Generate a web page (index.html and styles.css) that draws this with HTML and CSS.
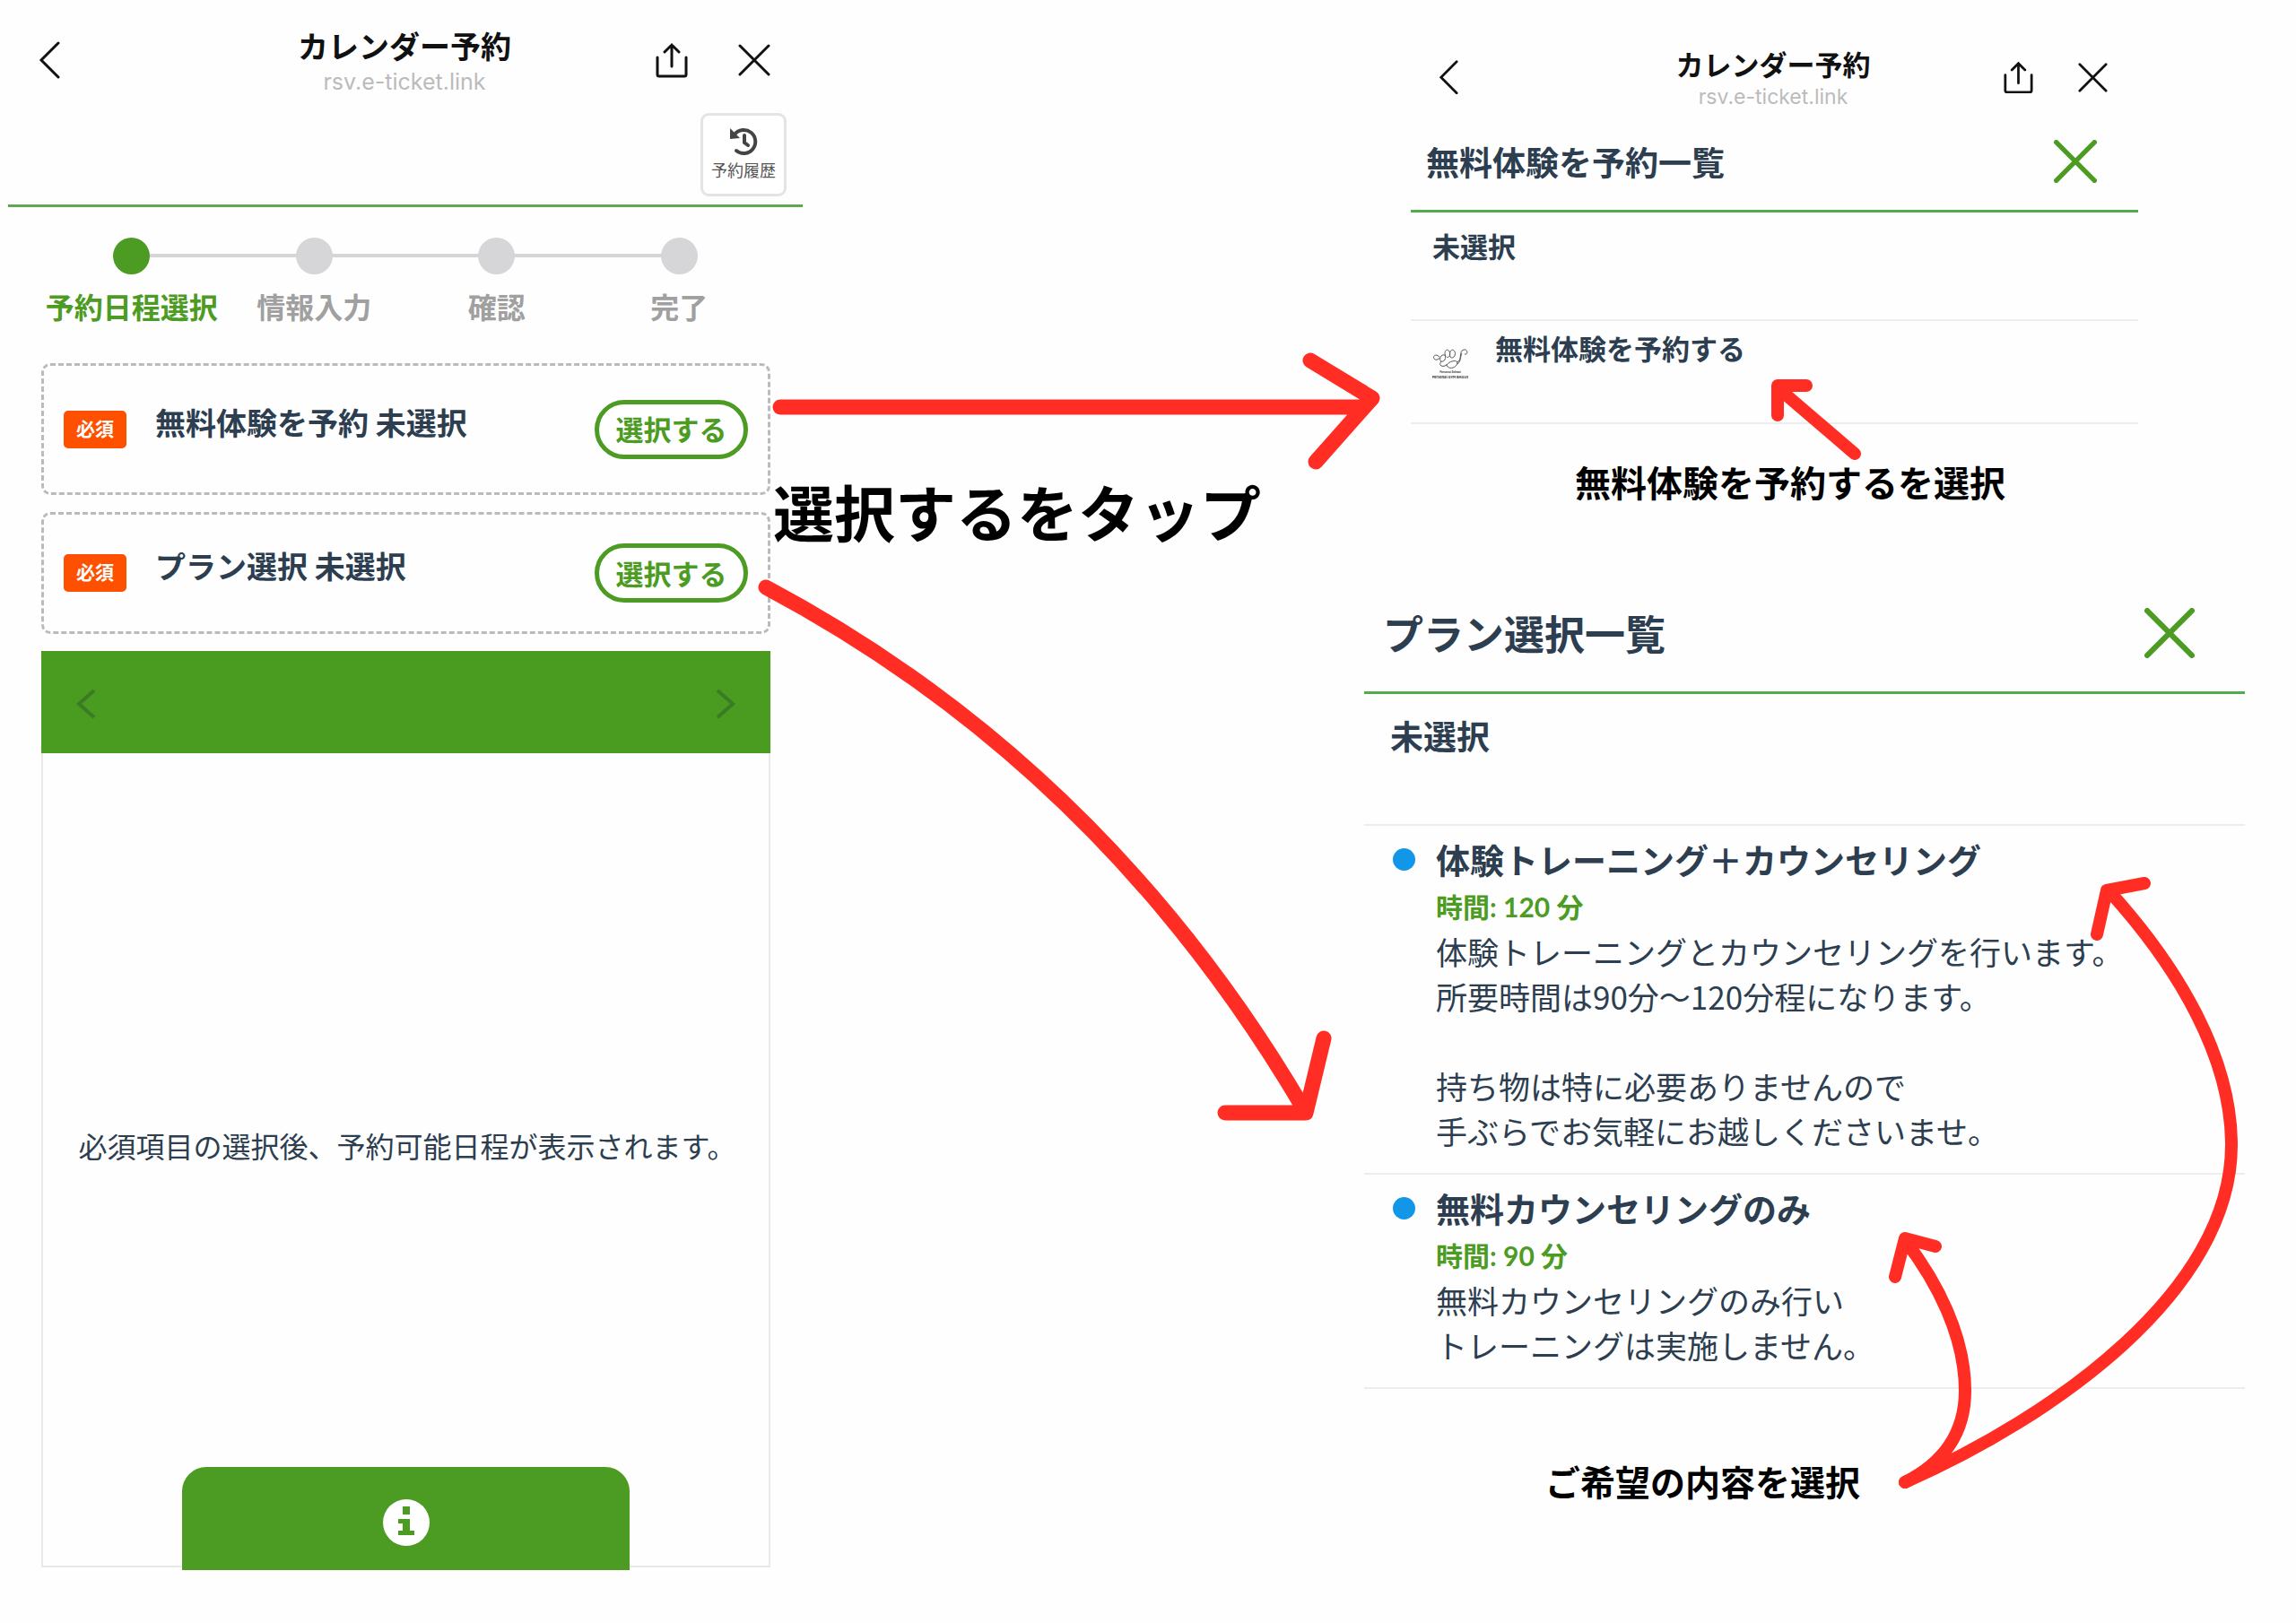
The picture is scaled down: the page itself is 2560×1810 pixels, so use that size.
FILE: index.html
```html
<!DOCTYPE html>
<html lang="ja">

<head>
    <meta charset="UTF-8">
    <meta name="viewport" content="width=device-width, initial-scale=1.0">
    <title>カレンダー予約</title>
    <link rel="stylesheet" href="styles.css">
</head>

<body>
    <main class="board">
        <section class="panel calendar-panel">
            <header class="topbar">
                <button type="button" class="icon-button" aria-label="戻る">
                    <svg class="icon-back" viewBox="0 0 24 42"><path d="M22 2 L3 21 L22 40"/></svg>
                </button>
                <div class="topbar-title">
                    <h1>カレンダー予約</h1>
                    <p>rsv.e-ticket.link</p>
                </div>
                <div class="topbar-actions">
                    <button type="button" class="icon-button" aria-label="共有">
                        <svg class="icon-share" viewBox="0 0 36 40"><path d="M9 16 M2 17 V36 Q2 38 4 38 H32 Q34 38 34 36 V17 M18 27 V3 M10 11 L18 3 L26 11"/></svg>
                    </button>
                    <button type="button" class="icon-button" aria-label="閉じる">
                        <svg class="icon-close" viewBox="0 0 36 36"><path d="M2 2 L34 34 M34 2 L2 34"/></svg>
                    </button>
                </div>
            </header>

            <div class="history-bar">
                <button type="button" class="history-button">
                    <svg class="icon-history" viewBox="0 0 32 32">
                        <path class="line" d="M6 8 A13 13 0 1 1 8 26"/>
                        <path class="line" d="M17 9 V17 L21 20"/>
                        <path class="solid" d="M1 1 L12 12 L1 13 Z"/>
                    </svg>
                    予約履歴
                </button>
            </div>

            <ol class="steps">
                <li class="step active">予約日程選択</li>
                <li class="step">情報入力</li>
                <li class="step">確認</li>
                <li class="step">完了</li>
            </ol>

            <div class="choices">
                <div class="choice choice-tall">
                    <span class="badge">必須</span>
                    <p class="choice-name">無料体験を予約 未選択</p>
                    <button type="button" class="select-button">選択する</button>
                </div>
                <div class="choice">
                    <span class="badge">必須</span>
                    <p class="choice-name">プラン選択 未選択</p>
                    <button type="button" class="select-button">選択する</button>
                </div>

                <div class="calendar">
                    <div class="calendar-header">
                        <button type="button" class="icon-button" aria-label="前へ">
                            <svg class="icon-arrow" viewBox="0 0 24 34"><path d="M21 2 L4 17 L21 32"/></svg>
                        </button>
                        <button type="button" class="icon-button" aria-label="次へ">
                            <svg class="icon-arrow" viewBox="0 0 24 34"><path d="M3 2 L20 17 L3 32"/></svg>
                        </button>
                    </div>
                    <div class="calendar-body">
                        <p>必須項目の選択後、予約可能日程が表示されます。</p>
                        <button type="button" class="info-tab" aria-label="案内">
                            <svg class="icon-info" viewBox="0 0 52 52">
                                <circle cx="26" cy="26" r="26"/>
                                <path d="M22 8 H30 V17 H22 Z M17 22 H30 V35 H35 V40 H17 V35 H22 V27 H17 Z"/>
                            </svg>
                        </button>
                    </div>
                </div>
            </div>
        </section>

        <p class="note note-tap">選択するをタップ</p>

        <div class="lists">
            <section class="panel trial-panel">
                <header class="topbar topbar-small">
                    <button type="button" class="icon-button" aria-label="戻る">
                        <svg class="icon-back" viewBox="0 0 24 42"><path d="M22 2 L3 21 L22 40"/></svg>
                    </button>
                    <div class="topbar-title">
                        <h2>カレンダー予約</h2>
                        <p>rsv.e-ticket.link</p>
                    </div>
                    <div class="topbar-actions">
                        <button type="button" class="icon-button" aria-label="共有">
                            <svg class="icon-share" viewBox="0 0 36 40"><path d="M2 17 V36 Q2 38 4 38 H32 Q34 38 34 36 V17 M18 27 V3 M10 11 L18 3 L26 11"/></svg>
                        </button>
                        <button type="button" class="icon-button" aria-label="閉じる">
                            <svg class="icon-close" viewBox="0 0 36 36"><path d="M2 2 L34 34 M34 2 L2 34"/></svg>
                        </button>
                    </div>
                </header>
                <div class="list-header">
                    <h3>無料体験を予約一覧</h3>
                    <button type="button" class="icon-button green" aria-label="一覧を閉じる">
                        <svg class="icon-close" viewBox="0 0 36 36"><path d="M2 2 L34 34 M34 2 L2 34"/></svg>
                    </button>
                </div>
                <ul class="list">
                    <li class="unselected">未選択</li>
                    <li class="trial-item">
                        <svg class="logo" viewBox="0 0 40 34">
                            <path d="M8 9 C4 5 0 8 2 11 C4 14 8 11 10 8 C13 5 16 8 14 12 C12 16 7 14 9 10 M15 9 C12 2 17 -1 19 3 C21 7 18 11 16 9 M20 9 C18 2 23 -1 25 3 C27 8 22 12 20 9 M10 14 C6 19 12 21 16 18 C20 13 28 12 28 16 C26 23 16 23 16 17 M27 15 C34 14 29 2 35 1 C40 0 40 7 36 6 M28 17 C32 14 31 9 33 5"/>
                            <text class="logo-sub" x="20" y="27">Personal School</text>
                            <text class="logo-name" x="20" y="33">Personal GYM BAGUS</text>
                        </svg>
                        <span>無料体験を予約する</span>
                    </li>
                </ul>
            </section>
            <p class="note note-trial">無料体験を予約するを選択</p>

            <section class="panel plan-panel">
                <div class="list-header">
                    <h3>プラン選択一覧</h3>
                    <button type="button" class="icon-button green" aria-label="一覧を閉じる">
                        <svg class="icon-close" viewBox="0 0 36 36"><path d="M2 2 L34 34 M34 2 L2 34"/></svg>
                    </button>
                </div>
                <ul class="list">
                    <li class="unselected">未選択</li>
                    <li class="plan-item">
                        <h4>体験トレーニング＋カウンセリング</h4>
                        <p class="plan-time">時間: 120 分</p>
                        <p>体験トレーニングとカウンセリングを行います。<br>所要時間は90分〜120分程になります。<br><br>持ち物は特に必要ありませんので<br>手ぶらでお気軽にお越しくださいませ。</p>
                    </li>
                    <li class="plan-item">
                        <h4>無料カウンセリングのみ</h4>
                        <p class="plan-time">時間: 90 分</p>
                        <p>無料カウンセリングのみ行い<br>トレーニングは実施しません。</p>
                    </li>
                </ul>
            </section>
            <p class="note note-plan">ご希望の内容を選択</p>
        </div>

        <!-- hand drawn arrows between the panels -->
        <svg class="arrows" viewBox="0 0 2560 1810" aria-hidden="true">
            <g stroke-width="17">
                <path d="M870 454 H1518 M1461 402 L1530 444 L1467 515"/>
                <path d="M854 655 Q1230 855 1455 1239 M1366 1241 H1456 L1476 1158"/>
            </g>
            <g stroke-width="14">
                <path d="M2068 506 L1984 434 M2014 430 H1982 V463"/>
                <path d="M2124 1653 C2290 1580 2488 1440 2488 1277 C2488 1180 2430 1080 2351 993 M2391 985 L2349 993 L2338 1042"/>
                <path d="M2124 1653 C2170 1630 2191 1595 2191 1551 C2191 1490 2160 1430 2124 1383 M2158 1390 L2124 1381 L2113 1424"/>
            </g>
        </svg>
    </main>
</body>

</html>
```
FILE: styles.css
```css
* {
    box-sizing: border-box;
}

body {
    font-family: 'Noto Sans CJK JP', sans-serif;
    margin: 0;
    color: #2c3e50;
    background-color: #fefefe;
}

h1, h2, h3, h4, p, ul, ol {
    margin: 0;
    padding: 0;
}

ul, ol {
    list-style: none;
}

button {
    font-family: inherit;
    cursor: pointer;
}

svg {
    display: block;
    fill: none;
    stroke: currentColor;
}

/* board: calendar, note, lists */
.board {
    position: relative;
    display: grid;
    grid-template-columns: 886fr 626fr 982fr;
    padding: 0 57px 60px 9px;
}

.arrows {
    position: absolute;
    top: 0;
    left: 0;
    width: 100%;
    color: #ff2d23;
    stroke-linecap: round;
    stroke-linejoin: round;
    pointer-events: none;
}

.note {
    color: #000;
    font-size: 40px;
    font-weight: bold;
    line-height: 60px;
    white-space: nowrap;
}

.note-tap {
    font-size: 68px;
    line-height: 100px;
    margin: 520px 0 0 -33px;
}

.note-trial {
    padding-left: 235px;
    margin-top: 34px;
}

.note-plan {
    padding-left: 202px;
    margin-top: 72px;
    font-size: 39px;
}

/* browser bar */
.topbar {
    display: grid;
    grid-template-columns: 1fr auto 1fr;
    align-items: center;
    padding: 27px 36px 0 34px;
    color: #111;
}

.topbar-title {
    text-align: center;
}

.topbar-title h1,
.topbar-title h2 {
    font-size: 34px;
    line-height: 48px;
}

.topbar-title p {
    font-family: Inter, sans-serif;
    font-size: 25px;
    line-height: 32px;
    color: #bbb;
}

.topbar-actions {
    display: flex;
    justify-content: flex-end;
    align-items: center;
    gap: 56px;
}

.icon-button {
    padding: 0;
    border: none;
    background: none;
    color: inherit;
}

.icon-back,
.icon-share,
.icon-close {
    stroke-width: 3;
    stroke-linecap: round;
}

.icon-back {
    width: 24px;
}

.icon-share,
.icon-close {
    width: 36px;
}

.topbar-small {
    padding: 49px 34px 0 31px;
}

.topbar-small h2 {
    font-size: 31px;
    line-height: 44px;
}

.topbar-small p {
    font-size: 23px;
    line-height: 30px;
}

.topbar-small .topbar-actions {
    gap: 50px;
}

.topbar-small .icon-back {
    width: 22px;
}

.topbar-small .icon-share,
.topbar-small .icon-close {
    width: 33px;
}

/* calendar panel */
.history-bar {
    display: flex;
    justify-content: flex-end;
    padding: 19px 18px 9px;
    border-bottom: 3px solid #5fa84f;
}

.history-button {
    display: flex;
    flex-direction: column;
    align-items: center;
    width: 96px;
    height: 93px;
    padding: 13px 0 0;
    border: 3px solid #e4e4e4;
    border-radius: 9px;
    background-color: #fff;
    color: #555;
    font-size: 18px;
    line-height: 30px;
}

.icon-history {
    width: 32px;
    flex-shrink: 0;
    color: #444;
}

.icon-history .line {
    stroke-width: 4;
    stroke-linecap: round;
}

.icon-history .solid {
    fill: currentColor;
    stroke: none;
}

.steps {
    display: grid;
    grid-template-columns: repeat(4, 1fr);
    padding: 34px 36px 0;
}

.step {
    position: relative;
    color: #a0a0a0;
    font-size: 32px;
    font-weight: bold;
    line-height: 40px;
    text-align: center;
    white-space: nowrap;
}

.step::before {
    content: "";
    display: block;
    width: 41px;
    height: 41px;
    margin: 0 auto 15px;
    border-radius: 50%;
    background-color: #d6d6d9;
}

.step:not(:last-child)::after {
    content: "";
    position: absolute;
    top: 18px;
    left: 50%;
    width: 100%;
    height: 4px;
    margin-left: 20px;
    background-color: #d6d6d9;
    z-index: -1;
}

.step.active {
    color: #4c9b22;
}

.step.active::before {
    background-color: #4c9b22;
}

.choices {
    display: flex;
    flex-direction: column;
    gap: 19px;
    padding: 44px 36px 0 37px;
}

.choice {
    display: flex;
    align-items: center;
    min-height: 136px;
    padding: 0 22px;
    border: 3px dashed #bbb;
    border-radius: 10px;
}

.choice-tall {
    min-height: 147px;
}

.badge {
    width: 70px;
    height: 42px;
    border-radius: 5px;
    background-color: #ff5000;
    color: #fff;
    font-size: 21px;
    font-weight: bold;
    line-height: 38px;
    text-align: center;
}

.choice-name {
    flex: 1;
    padding: 0 0 16px 32px;
    font-size: 34px;
    font-weight: bold;
    line-height: 40px;
}

.select-button {
    width: 171px;
    height: 66px;
    padding: 0 0 2px;
    border: 5px solid #4c9b22;
    border-radius: 33px;
    background-color: #fff;
    color: #4c9b22;
    font-size: 31px;
    font-weight: bold;
}

.calendar-header {
    display: flex;
    justify-content: space-between;
    align-items: center;
    height: 114px;
    padding: 4px 38px 0;
    background-color: #4a9c21;
    color: #3c7a26;
}

.icon-arrow {
    width: 24px;
    stroke-width: 4;
}

.calendar-body {
    display: flex;
    flex-direction: column;
    align-items: center;
    border: 2px solid #e9e9e9;
    border-top: none;
}

.calendar-body p {
    padding: 413px 0 335px 3px;
    font-size: 32px;
    line-height: 48px;
}

.info-tab {
    display: flex;
    justify-content: center;
    align-items: center;
    width: 499px;
    height: 115px;
    margin-bottom: -5px;
    padding: 8px 0 0;
    border: none;
    border-radius: 27px 27px 0 0;
    background-color: #4c9b22;
    color: #fff;
}

.icon-info {
    width: 52px;
    stroke: none;
}

.icon-info circle {
    fill: #fff;
}

.icon-info path {
    fill: #4c9b22;
}

/* lists */
.trial-panel {
    margin: 0 119px 0 52px;
}

.list-header {
    display: flex;
    justify-content: space-between;
    align-items: center;
    height: 114px;
    padding: 2px 46px 0 17px;
    border-bottom: 3px solid #54ad4c;
}

.list-header h3 {
    font-size: 37px;
    line-height: 56px;
}

.green {
    color: #4c9b22;
}

.green .icon-close {
    width: 48px;
    stroke-width: 4;
}

.list li {
    border-bottom: 2px solid #ededed;
}

.unselected {
    min-height: 121px;
    padding: 15px 24px 0;
    font-size: 31px;
    font-weight: bold;
    line-height: 44px;
}

.trial-item {
    display: flex;
    align-items: flex-start;
    gap: 30px;
    min-height: 115px;
    padding: 8px 24px 0;
    font-size: 31px;
    font-weight: bold;
    line-height: 44px;
}

.logo {
    width: 40px;
    margin-top: 23px;
    color: #555;
}

.logo text {
    fill: #333;
    stroke: none;
    text-anchor: middle;
}

.logo-sub {
    font-size: 3px;
}

.logo-name {
    font-size: 4px;
}

.plan-panel {
    margin-top: 76px;
}

.plan-panel .list-header {
    height: 131px;
    padding: 0 56px 2px 21px;
}

.plan-panel h3 {
    font-size: 45px;
}

.plan-panel .icon-close {
    width: 56px;
}

.plan-panel .unselected {
    min-height: 147px;
    padding: 22px 29px 0;
    font-size: 37px;
    line-height: 48px;
}

.plan-item {
    position: relative;
    padding: 9px 0 22px 80px;
    font-size: 35px;
    line-height: 50px;
}

.plan-item::before {
    content: "";
    position: absolute;
    top: 25px;
    left: 32px;
    width: 25px;
    height: 25px;
    border-radius: 50%;
    background-color: #1296e8;
}

.plan-item h4 {
    font-size: 38px;
    line-height: 56px;
}

.plan-time {
    color: #4c9b22;
    font-family: Lato, 'Noto Sans CJK JP', sans-serif;
    font-size: 30px;
    font-weight: bold;
}
```
